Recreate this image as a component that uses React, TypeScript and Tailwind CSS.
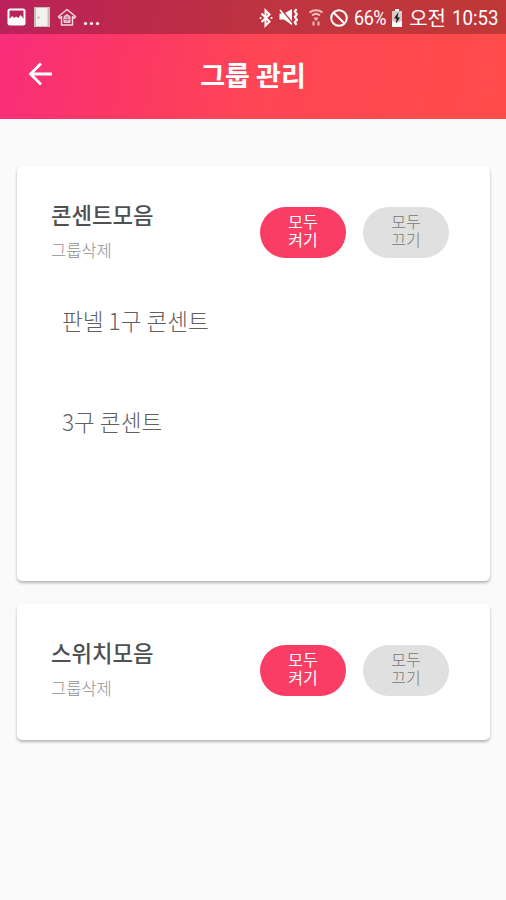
import React from "react";

interface Group {
  id: number;
  name: string;
  devices: string[];
}

const groups: Group[] = [
  { id: 1, name: "콘센트모음", devices: ["판넬 1구 콘센트", "3구 콘센트"] },
  { id: 2, name: "스위치모음", devices: [] },
];

const StatusBar: React.FC = () => (
  <div className="flex h-[34px] items-center justify-between bg-black/25 pl-[7px] pr-[9px] text-white">
    <div className="flex h-full items-center">
      <svg width="19" height="18" viewBox="0 0 19 18">
        <rect x="1.5" y="1.5" width="16" height="15" rx="1.5" fill="none" stroke="currentColor" strokeWidth="2" />
        <path d="M2 16v-5l3.500-3 1.500 2 2-1.500 2.500 1.500 2-3 3.500 4v5z" fill="currentColor" />
      </svg>
      <svg className="ml-[7px]" width="18" height="20" viewBox="0 0 18 20">
        <rect x="1" y="0" width="16" height="20" fill="#c9bcbc" />
        <rect x="3" y="1" width="11.5" height="18" fill="#f3f1ee" />
        <circle cx="5.5" cy="10.5" r="1" fill="#aaa0a0" />
      </svg>
      <svg className="ml-[6px]" width="20" height="19" viewBox="0 0 20 19">
        <path
          d="M10 1.5 1.5 8.5l1 1.5 2-1.3V17h11V8.7l2 1.3 1-1.5z"
          fill="none"
          stroke="#f3d7df"
          strokeWidth="1.5"
          strokeLinejoin="round"
        />
        <path d="M7 8.5l3-2 3 2v6H7z" fill="#e0b4c2" stroke="#f3d7df" />
        <path d="M7 11.5h6M10 8v6" stroke="#b5607c" strokeWidth="0.8" />
      </svg>
      <svg className="ml-[6px] mt-[13px]" width="18" height="5" viewBox="0 0 18 5" fill="currentColor">
        <circle cx="2.5" cy="2.5" r="1.6" />
        <circle cx="8.5" cy="2.5" r="1.6" />
        <circle cx="14.5" cy="2.5" r="1.6" />
      </svg>
    </div>

    <div className="flex h-full items-center">
      <svg className="mt-[2px]" width="14" height="20" viewBox="0 0 14 20" fill="none" stroke="currentColor" strokeWidth="2">
        <path d="M2.5 5.5l8 8-4 4V2.500l4 4-8 7.500" />
        <path d="M1.500 10h.1M12.500 10h.1" strokeLinecap="round" />
      </svg>
      <svg className="ml-[5px]" width="22" height="20" viewBox="0 0 22 20">
        <path d="M1.500 6.500H6l8-4.500v16l-8-5.500H1.500z" fill="currentColor" />
        <path d="M3.500 2.500l11 13.500" stroke="#b9363f" strokeWidth="1.500" />
        <path d="M2 3l11.500 14" stroke="currentColor" strokeWidth="1.600" />
        <path
          d="M18.500 2l-1.700 2.500 2 2.700-2 2.800 2 2.700-2 2.600 1.700 2.500"
          fill="none"
          stroke="currentColor"
          strokeWidth="2.200"
        />
      </svg>
      <svg className="ml-[7px]" width="18" height="20" viewBox="0 0 18 20" fill="none" stroke="#efb9bd">
        <path d="M2.500 5.500c3.700-3 9.300-3 13 0M5 8.500c2.500-2 5.500-2 8 0" strokeWidth="2" />
        <path d="M7 11l2 2.500 2-2.500z" fill="#efb9bd" />
        <path d="M6.500 14.500v4M11.500 14.500v4" strokeWidth="2" />
      </svg>
      <svg className="ml-[4px] mt-[2px]" width="20" height="20" viewBox="0 0 20 20" fill="none" stroke="currentColor">
        <circle cx="10" cy="10" r="7.800" strokeWidth="2" />
        <path d="M4.500 4.500l11 11" strokeWidth="2" />
      </svg>
      <span className="ml-[5px] mt-[2px] w-[34px] origin-left scale-x-90 whitespace-nowrap font-[Roboto,sans-serif] text-[20px] leading-[34px] tracking-[-0.5px]">
        66%
      </span>
      <svg className="ml-[3px] mt-[2px]" width="12" height="18" viewBox="0 0 12 18">
        <path d="M4 0h4v2h3v16H1V2h3z" fill="#fff" />
        <path d="M1 2h10v10l-5 2-5-2z" fill="#d8c9ca" />
        <path d="M7.500 3L3 9.500h2.500L5 14.500l4-6H6.500z" fill="#171717" />
      </svg>
      <span className="ml-[6px] mt-[2px] whitespace-nowrap font-['Noto_Sans_CJK_KR',sans-serif] text-[20px] leading-[34px]">
        오전
      </span>
      <span className="ml-[6px] mt-[2px] w-[45px] origin-left scale-x-[0.91] whitespace-nowrap font-[Roboto,sans-serif] text-[20.500px] leading-[34px]">
        10:53
      </span>
    </div>
  </div>
);

const Header: React.FC = () => (
  <header className="bg-[linear-gradient(100deg,#f92d7b_0%,#fb3765_25%,#ff4655_52%,#ff4c4a_100%)]">
    <StatusBar />
    <div className="grid h-[85px] grid-cols-[1fr_auto_1fr] items-center text-white">
      <button type="button" className="ml-[27px] mt-[-6px] w-6">
        <svg width="26" height="26" viewBox="0 0 26 26" fill="none" stroke="currentColor" strokeWidth="2.8">
          <path d="M14 2.500L3.500 13 14 23.500M3.500 13H25" />
        </svg>
      </button>
      <h1 className="mt-[-3px] text-[27px] font-bold leading-9">그룹 관리</h1>
    </div>
  </header>
);

const GroupCard: React.FC<{ group: Group }> = ({ group }) => (
  <section className="rounded-[5px] bg-white px-[34px] pb-[40px] pt-[32px] shadow-[0_2px_3px_rgba(0,0,0,0.28)]">
    <div className="flex items-start justify-between">
      <div>
        <h2 className="mt-px text-[22.300px] font-medium leading-[30px] text-[#505050]">{group.name}</h2>
        <button type="button" className="mt-[9px] block text-[16.500px] font-light leading-6 text-[#909090]">
          그룹삭제
        </button>
      </div>
      <div className="mr-[7px] mt-[9px] flex gap-[17px] text-[16px] leading-[18px]">
        <button type="button" className="h-[51px] w-[86px] rounded-full bg-[#f93d65] pb-[5px] text-white">
          모두
          <br />
          켜기
        </button>
        <button type="button" className="h-[51px] w-[86px] rounded-full bg-[#e0e0e0] pb-[5px] font-light text-[#777777]">
          모두
          <br />
          끄기
        </button>
      </div>
    </div>
    {group.devices.length > 0 && (
      <ul className="h-[279px] pl-[11px] pt-[23px]">
        {group.devices.map((device) => (
          <li key={device} className="h-[101px] pt-[20px] text-[22.600px] font-light leading-8 text-[#606060]">
            {device}
          </li>
        ))}
      </ul>
    )}
  </section>
);

const App: React.FC = () => {
  return (
    <div className="h-[900px] w-[506px] overflow-hidden bg-[#fafafa] font-['Noto_Sans_CJK_KR',sans-serif]">
      <Header />
      <main className="flex flex-col gap-[23px] pl-[17px] pr-[16px] pt-[47px]">
        {groups.map((group) => (
          <GroupCard key={group.id} group={group} />
        ))}
      </main>
    </div>
  );
};

export default App;
